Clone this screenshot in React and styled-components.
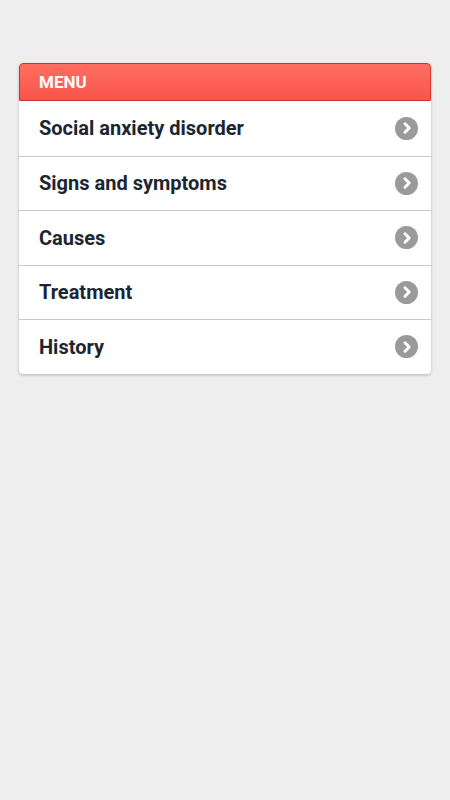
import React from "react";
import styled, { createGlobalStyle } from "styled-components";

const GlobalStyle = createGlobalStyle`
  html, body {
    margin: 0;
    padding: 0;
    background: #eeeeee;
    font-family: Roboto, "Liberation Sans", sans-serif;
  }
`;

// 화면 전체
const Page = styled.div`
  min-height: 800px;
  padding: 63px 19px 0 19px;
  box-sizing: border-box;
`;

// 메뉴 카드
const Card = styled.div`
  background: #fff;
  border-radius: 4px;
  box-shadow: 0 1px 3px rgba(0, 0, 0, 0.25);
`;

// 빨간 헤더
const Header = styled.div`
  height: 38px;
  box-sizing: border-box;
  display: flex;
  align-items: center;
  padding: 0 19px;
  background: linear-gradient(#ff6e63, #f9554a);
  border: 1px solid #c8382e;
  border-radius: 4px 4px 0 0;
  color: #fff;
  font-size: 17px;
  font-weight: 700;
`;

const List = styled.ul`
  list-style: none;
  margin: 0;
  padding: 0;
`;

const Item = styled.li`
  height: 54.5px;
  box-sizing: border-box;
  display: flex;
  align-items: center;
  justify-content: space-between;
  padding: 0 13px 0 20px;
  border-top: ${(p) => (p.$first ? "none" : "1px solid #c8c8c8")};
  color: #1b2631;
  font-size: 20px;
  font-weight: 700;
`;

const Arrow = styled.span`
  width: 23px;
  height: 23px;
  border-radius: 50%;
  background: #9a9a9a;
  display: flex;
  align-items: center;
  justify-content: center;
`;

const items = [
  "Social anxiety disorder",
  "Signs and symptoms",
  "Causes",
  "Treatment",
  "History",
];

const App = () => {
  return (
    <Page>
      <GlobalStyle />
      <Card>
        <Header>MENU</Header>
        <List>
          {items.map((label, i) => (
            <Item key={label} $first={i === 0}>
              {label}
              <Arrow>
                <svg width="14" height="14" viewBox="0 0 14 14">
                  <path
                    d="M5 2.8 L9.2 7 L5 11.2"
                    fill="none"
                    stroke="#fff"
                    strokeWidth="3"
                    strokeLinecap="round"
                    strokeLinejoin="round"
                  />
                </svg>
              </Arrow>
            </Item>
          ))}
        </List>
      </Card>
    </Page>
  );
};

export default App;
